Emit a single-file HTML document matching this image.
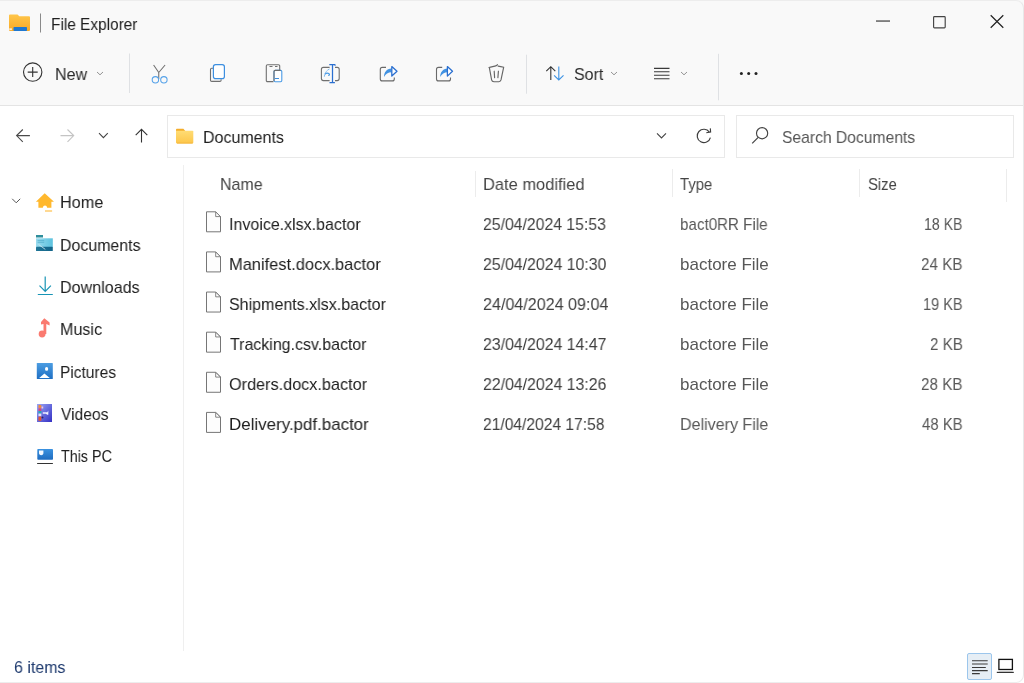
<!DOCTYPE html>
<html><head><meta charset="utf-8">
<style>
*{margin:0;padding:0;box-sizing:border-box}
html,body{width:1024px;height:683px;overflow:hidden;background:#fff}
body{position:relative;font-family:"Liberation Sans",sans-serif;font-size:16px;color:#202020}
.t{position:absolute;line-height:20px;white-space:pre;will-change:transform;transform-origin:0 0;font-size:17px}
svg{position:absolute;overflow:visible}
#top{position:absolute;left:0;top:0;width:1024px;height:106px;background:#f9f9f9;border-bottom:1px solid #e4e4e4}
.sep{position:absolute;width:1px;background:#e3e3e3}
.box{position:absolute;border:1px solid #e9e9e9;background:#fff}
.hs{position:absolute;width:1px;background:#ececec}
.g{color:#444}
.d{color:#404040;letter-spacing:-0.2px}
.ty{color:#575757}
.sz{transform:scaleX(0.87);transform-origin:100% 50%}
</style></head><body>
<div id="top"></div>

<!-- title bar -->
<svg style="left:0;top:0" width="60" height="40" viewBox="0 0 60 40">
  <defs><linearGradient id="fy" x1="0" y1="0" x2="0" y2="1"><stop offset="0" stop-color="#ffc64a"/><stop offset="1" stop-color="#f7a928"/></linearGradient></defs>
  <path d="M10 14.5h7.5l1.8 1.8H29a1 1 0 0 1 1 1V30a1 1 0 0 1-1 1H10a1 1 0 0 1-1-1V15.5a1 1 0 0 1 1-1z" fill="url(#fy)"/>
  <rect x="13.5" y="27" width="13.5" height="4" rx="0.8" fill="#1f78d1"/>
  <rect x="9.3" y="28.3" width="2.6" height="1.8" fill="#fff" opacity="0.8"/>
  <rect x="40" y="13.5" width="1" height="19" fill="#8a8a8a"/>
</svg>

<!-- window controls -->
<svg style="left:860px;top:0" width="164" height="45" viewBox="860 0 164 45">
  <rect x="876" y="20.4" width="14" height="1.3" fill="#4a4a4a"/>
  <rect x="933.6" y="16.6" width="11.6" height="11.2" rx="0.8" fill="none" stroke="#444" stroke-width="1.15"/>
  <path d="M990.7 15.3L1003.3 27.7M1003.3 15.3L990.7 27.7" stroke="#222" stroke-width="1.2"/>
</svg>

<!-- toolbar -->
<svg style="left:0;top:50px" width="800" height="50" viewBox="0 50 800 50">
  <!-- new -->
  <circle cx="32.7" cy="72.1" r="9.2" fill="none" stroke="#333" stroke-width="1.1"/>
  <path d="M32.7 67.1v10M27.7 72.1h10" stroke="#333" stroke-width="1.1"/>
  <path d="M97 72l3 2.8 3-2.8" fill="none" stroke="#888" stroke-width="0.9"/>
  <rect x="129" y="53.5" width="1" height="39.5" fill="#dfe1e4"/>
  <!-- cut -->
  <path d="M153.6 65L158.75 72.5M165.1 65L158.75 72.5M158.75 72.5v6.4" stroke="#6e6e6e" stroke-width="1.05" fill="none"/>
  <circle cx="155.4" cy="79.8" r="3.2" fill="none" stroke="#56a2e9" stroke-width="1.05"/>
  <circle cx="163.9" cy="79.8" r="3.2" fill="none" stroke="#56a2e9" stroke-width="1.05"/>
  <!-- copy -->
  <path d="M213 68.3h-1.3a1.2 1.2 0 0 0-1.2 1.2v10.7a1.2 1.2 0 0 0 1.2 1.2h8.2a1.2 1.2 0 0 0 1.2-1.2v-1" fill="none" stroke="#707070" stroke-width="1.1"/>
  <rect x="213.4" y="64.6" width="11" height="14" rx="2.2" fill="#fff" stroke="#3d8fe0" stroke-width="1.2"/>
  <!-- paste -->
  <path d="M273.5 81.6h-6a1.2 1.2 0 0 1-1.2-1.2V66a1.2 1.2 0 0 1 1.2-1.2h11a1.2 1.2 0 0 1 1.2 1.2v4" fill="none" stroke="#707070" stroke-width="1.1"/>
  <path d="M269.5 66.5h3M275 66.5h2.5" stroke="#707070" stroke-width="1"/>
  <rect x="274" y="70.4" width="7.8" height="11.4" rx="1.2" fill="#fff" stroke="#4a9be6" stroke-width="1.1"/>
  <path d="M274 81v-9.4a1.2 1.2 0 0 1 1.2-1.2h5.4" fill="none" stroke="#707070" stroke-width="1.1"/>
  <path d="M275 78.5h4" stroke="#3d8fe0" stroke-width="1"/>
  <!-- rename -->
  <path d="M329.6 67.4h-6.2a2 2 0 0 0-2 2v9.2a2 2 0 0 0 2 2h6.2M335 67.4h2.2a2 2 0 0 1 2 2v9.2a2 2 0 0 1-2 2H335" fill="none" stroke="#707070" stroke-width="1.1"/>
  <path d="M332.5 64.8v17.7M329.3 64.7h5.4l.8.8M329.5 82.5h5.4" fill="none" stroke="#2a6fd0" stroke-width="1.25"/>
  <path d="M324.4 76.6c.3-3.6 2.2-6.4 5.2-7.6" fill="none" stroke="#5aa6ea" stroke-width="0.9" stroke-dasharray="1.4 0.6"/>
  <path d="M324.9 74.4c1.2-1.3 2.9-1.6 4.2-.6.9.7.2 1.9-.9 1.5" fill="none" stroke="#4a9be6" stroke-width="1.1"/>
  <!-- share 1 -->
  <path d="M386 67.4h-3.7a2 2 0 0 0-2 2v9.5a2 2 0 0 0 2 2h10a2 2 0 0 0 2-2v-1.5" fill="none" stroke="#6a6a6a" stroke-width="1.1"/>
  <path d="M384 77c.1-4.6 2.4-8 7.6-8.4v3.6c-3.6.1-6 1.6-7.6 4.8z" fill="#4192e2"/>
  <path d="M391.8 66.6l5.2 4.7-5.2 4.8z" fill="#fff" stroke="#2a6fd0" stroke-width="1.3" stroke-linejoin="round"/>
  <!-- share 2 -->
  <path d="M442.2 67.4h-3.7a2 2 0 0 0-2 2v9.5a2 2 0 0 0 2 2h10a2 2 0 0 0 2-2v-1.5" fill="none" stroke="#6a6a6a" stroke-width="1.1"/>
  <path d="M440.2 77c.1-4.6 2.4-8 7.6-8.4v3.6c-3.6.1-6 1.6-7.6 4.8z" fill="#4192e2"/>
  <path d="M447.4 66.6l5.1 4.7-5.1 4.8z" fill="#fff" stroke="#2a6fd0" stroke-width="1.3" stroke-linejoin="round"/>
  <!-- delete -->
  <path d="M489 67.5c2.8-.8 5.3-1.2 7.4-1.9l1-.9M498.1 66.1c2 .2 3.8.6 5.7 1.1M489.4 67.8l2.2 12q.4 1.8 2.4 1.9h4.8q1.8-.1 2.2-1.8l2.6-12.3M494.2 71.2l.4 6.4M498.4 71.2l-.5 6.4" fill="none" stroke="#666" stroke-width="1.15" stroke-linecap="round"/>
  <rect x="526" y="54.7" width="1" height="39" fill="#dfe1e4"/>
  <!-- sort -->
  <path d="M550.8 80V66.8M546.3 71.2l4.5-4.5 4.5 4.5" fill="none" stroke="#333" stroke-width="1.1"/>
  <path d="M558.8 66.5v13.3M554.1 75.3l4.7 4.6 4.7-4.6" fill="none" stroke="#3d92e3" stroke-width="1.1"/>
  <path d="M611 72l3 2.8 3-2.8" fill="none" stroke="#888" stroke-width="0.9"/>
  <!-- view -->
  <path d="M654 68.4h15.5M654 71.8h15.5M654 75.2h15.5M654 78.8h15.5" stroke="#3a3a3a" stroke-width="1.1"/>
  <path d="M681 72l3 2.8 3-2.8" fill="none" stroke="#888" stroke-width="0.9"/>
  <rect x="718" y="53.8" width="1" height="46.5" fill="#dfe1e4"/>
  <!-- more -->
  <circle cx="741.4" cy="73.4" r="1.5" fill="#222"/>
  <circle cx="748.7" cy="73.4" r="1.5" fill="#222"/>
  <circle cx="756" cy="73.4" r="1.5" fill="#222"/>
</svg>

<!-- nav row -->
<svg style="left:0;top:110px" width="180" height="50" viewBox="0 110 180 50">
  <path d="M16.6 135.6h13.3M22.8 129.5l-6.2 6.1 6.2 6.2" fill="none" stroke="#4a4a4a" stroke-width="1.1"/>
  <path d="M73.7 135.6H60.5M67.5 129.5l6.2 6.1-6.2 6.2" fill="none" stroke="#c4c4c4" stroke-width="1.1"/>
  <path d="M99 133.2l4.4 4.4 4.4-4.4" fill="none" stroke="#444" stroke-width="1.1"/>
  <path d="M141.5 142.5v-13M135.7 135.2l5.8-5.8 5.8 5.8" fill="none" stroke="#333" stroke-width="1.1"/>
</svg>
<div class="box" style="left:167px;top:115px;width:558px;height:43px"></div>
<div class="box" style="left:736px;top:115px;width:277.5px;height:43px"></div>
<svg style="left:160px;top:110px" width="620" height="50" viewBox="160 110 620 50">
  <defs><linearGradient id="fy2" x1="0" y1="0" x2="0" y2="1"><stop offset="0" stop-color="#ffdc74"/><stop offset="1" stop-color="#fdc64a"/></linearGradient></defs>
  <path d="M176.8 128.8h6.6l1.9 2.3H176v-1.5a.8.8 0 0 1 .8-.8z" fill="#f4ad2b"/>
  <path d="M176 130.8h16.5a.8.8 0 0 1 .8.8v11a.8.8 0 0 1-.8.8H176.8a.8.8 0 0 1-.8-.8z" fill="url(#fy2)"/>
  <path d="M177 143.1h15.6" stroke="#f2b23a" stroke-width="0.8"/>
  <path d="M657 133.4l4.5 4.5 4.5-4.5" fill="none" stroke="#444" stroke-width="1.1"/>
  <path d="M709.4 132.1A6.7 6.7 0 1 0 710.4 137.6" fill="none" stroke="#3e3e3e" stroke-width="1.15"/>
  <path d="M710.3 128.4L710.6 132L706.3 132.7" fill="none" stroke="#3e3e3e" stroke-width="1.15"/>
  <circle cx="762.1" cy="133.2" r="5.6" fill="none" stroke="#444" stroke-width="1.15"/>
  <path d="M758.2 137.3l-6 6" stroke="#444" stroke-width="1.2"/>
</svg>

<!-- sidebar -->
<div class="sep" style="left:182.5px;top:165px;height:486px;background:#efefef"></div>
<svg style="left:0;top:180px" width="60" height="300" viewBox="0 180 60 300">
  <path d="M12.2 198.8l4 4 4-4" fill="none" stroke="#555" stroke-width="1"/>
  <!-- home -->
  <path d="M44.7 193.2L35.9 201.8H38.4V207.8H42.8Q43.1 205.6 45 205.6Q46.9 205.6 47.2 207.8H51.4V201.8H54z" fill="#ffb82e"/>
  <rect x="45" y="210.3" width="7.1" height="1.4" fill="#ffc964"/>
  <!-- documents -->
  <defs><linearGradient id="dg" x1="0" y1="0" x2="1" y2="0"><stop offset="0" stop-color="#9adbee"/><stop offset="1" stop-color="#5cc2de"/></linearGradient>
  <linearGradient id="dg2" x1="0" y1="0" x2="1" y2="0"><stop offset="0" stop-color="#1f7596"/><stop offset="1" stop-color="#136489"/></linearGradient></defs>
  <rect x="36" y="235" width="7" height="2.5" fill="#2f8e9c"/>
  <rect x="36" y="238.3" width="16.8" height="9" fill="url(#dg)"/>
  <rect x="36" y="246.8" width="16.8" height="4.3" rx="0.7" fill="url(#dg2)"/>
  <path d="M37.6 240.6h6.6M37.6 242.3h6.6" stroke="#3f9fbe" stroke-width="0.55"/>
  <path d="M38.6 244.5L45.3 249.4" stroke="#d5eef5" stroke-width="0.8"/>
  <!-- downloads -->
  <path d="M45.2 276.5v14.8M39.5 285.6l5.7 5.7 5.7-5.7" fill="none" stroke="#1894b5" stroke-width="1.2"/>
  <rect x="37.8" y="294" width="15" height="1" fill="#1894b5"/>
  <!-- music -->
  <path d="M44.3 318.2L49.6 322.4V325.4L46.3 324V334H43.5V324L41 324.5V322Z" fill="#fa7a70"/>
  <circle cx="42.1" cy="334" r="3.4" fill="#fa7a70"/>
  <!-- pictures -->
  <defs><linearGradient id="pg" x1="0" y1="0" x2="0" y2="1"><stop offset="0" stop-color="#4c9de2"/><stop offset="1" stop-color="#1e6fc4"/></linearGradient>
  <linearGradient id="vg" x1="0" y1="0" x2="1" y2="1"><stop offset="0" stop-color="#9aa6f6"/><stop offset="1" stop-color="#3430c4"/></linearGradient>
  <linearGradient id="cg" x1="0" y1="0" x2="0" y2="1"><stop offset="0" stop-color="#3a92e0"/><stop offset="1" stop-color="#1f6cc0"/></linearGradient></defs>
  <rect x="36.8" y="363" width="16" height="16" rx="0.6" fill="url(#pg)"/>
  <ellipse cx="46.6" cy="368.9" rx="1.6" ry="1.9" fill="#fff"/>
  <path d="M39.2 377.9L44.4 373.4L49.8 377.9z" fill="#fff"/>
  <!-- videos -->
  <rect x="37" y="404" width="15" height="18" fill="url(#vg)"/>
  <rect x="38.5" y="405" width="2.8" height="3.2" fill="#f08a3a"/>
  <rect x="38.5" y="408.4" width="2.8" height="2.6" fill="#d8457a"/>
  <rect x="38.5" y="411" width="2.8" height="2.6" fill="#27a7b8"/>
  <rect x="38.5" y="413.6" width="2.8" height="2.6" fill="#e0e0f8"/>
  <rect x="38.5" y="416.6" width="2.8" height="4.2" fill="#e8542f"/>
  <rect x="41.6" y="406.5" width="1.6" height="2" fill="#f4c6e0"/>
  <path d="M42.8 412.2h4.5l1 -1.6v4.2h-1l-1.5-1h-3z" fill="#f2f0ff"/>
  <circle cx="42.5" cy="417.5" r="1" fill="#2b2470"/>
  <!-- this pc -->
  <rect x="37.3" y="449" width="15.7" height="10.7" rx="0.8" fill="url(#cg)"/>
  <path d="M39 450.6h4.4v3a2.2 2 0 0 1-2.2 1.6 2.2 2 0 0 1-2.2-1.6z" fill="#f2f8ff"/>
  <rect x="37" y="462.9" width="16" height="1.1" rx="0.5" fill="#333"/>
</svg>

<!-- headers -->
<div class="hs" style="left:475px;top:171px;height:25.5px"></div>
<div class="hs" style="left:672px;top:168.5px;height:28px"></div>
<div class="hs" style="left:859px;top:168.5px;height:28px"></div>
<div class="hs" style="left:1006px;top:168.5px;height:33px"></div>

<!-- file rows -->
<svg style="left:200px;top:200px" width="30" height="250" viewBox="200 200 30 250">
  <defs>
    <g id="fi">
      <path d="M206.5 211.5h9.3l4.7 4.7v15.3h-14z" fill="#fdfdfd" stroke="#767676" stroke-width="1"/>
      <path d="M215.7 211.6v4.7h4.7z" fill="#fff" stroke="#767676" stroke-width="0.9" stroke-linejoin="round"/>
    </g>
  </defs>
  <use href="#fi" y="0.3"/>
  <use href="#fi" y="40.42"/>
  <use href="#fi" y="80.54"/>
  <use href="#fi" y="120.66"/>
  <use href="#fi" y="160.78"/>
  <use href="#fi" y="200.90"/>
</svg>




<!-- status -->
<div class="t" style="left:50.69px;top:15px;color:#202020;transform:scaleX(0.9053)">File Explorer</div>
<div class="t" style="left:55.05px;top:65px;color:#2a2a2a;transform:scaleX(0.9455)">New</div>
<div class="t" style="left:573.56px;top:65px;color:#2a2a2a;transform:scaleX(0.9400)">Sort</div>
<div class="t" style="left:203.46px;top:128px;color:#202020;transform:scaleX(0.9412)">Documents</div>
<div class="t" style="left:782.08px;top:128px;color:#555555;transform:scaleX(0.9210)">Search Documents</div>
<div class="t" style="left:59.55px;top:193px;color:#202020;transform:scaleX(0.9545)">Home</div>
<div class="t" style="left:59.56px;top:236px;color:#202020;transform:scaleX(0.9365)">Documents</div>
<div class="t" style="left:59.55px;top:278px;color:#202020;transform:scaleX(0.9470)">Downloads</div>
<div class="t" style="left:59.55px;top:320px;color:#202020;transform:scaleX(0.9477)">Music</div>
<div class="t" style="left:59.59px;top:363px;color:#202020;transform:scaleX(0.9117)">Pictures</div>
<div class="t" style="left:60.50px;top:405px;color:#202020;transform:scaleX(0.9176)">Videos</div>
<div class="t" style="left:60.50px;top:447px;color:#202020;transform:scaleX(0.8417)">This PC</div>
<div class="t" style="left:219.76px;top:175px;color:#444444;transform:scaleX(0.9386)">Name</div>
<div class="t" style="left:482.78px;top:175px;color:#444444;transform:scaleX(0.9675)">Date modified</div>
<div class="t" style="left:680.20px;top:175px;color:#444444;transform:scaleX(0.8722)">Type</div>
<div class="t" style="left:867.53px;top:175px;color:#444444;transform:scaleX(0.8742)">Size</div>
<div class="t" style="left:228.96px;top:215px;color:#202020;transform:scaleX(0.9410)">Invoice.xlsx.bactor</div>
<div class="t" style="left:482.82px;top:215px;color:#404040;transform:scaleX(0.9279)">25/04/2024 15:53</div>
<div class="t" style="left:680.21px;top:215px;color:#575757;transform:scaleX(0.8918)">bact0RR File</div>
<div class="t" style="left:923.97px;top:215px;color:#575757;transform:scaleX(0.8289)">18 KB</div>
<div class="t" style="left:228.93px;top:255px;color:#202020;transform:scaleX(0.9673)">Manifest.docx.bactor</div>
<div class="t" style="left:482.82px;top:255px;color:#404040;transform:scaleX(0.9317)">25/04/2024 10:30</div>
<div class="t" style="left:680.10px;top:255px;color:#575757;transform:scaleX(0.9977)">bactore File</div>
<div class="t" style="left:920.90px;top:255px;color:#575757;transform:scaleX(0.8956)">24 KB</div>
<div class="t" style="left:228.96px;top:295px;color:#202020;transform:scaleX(0.9430)">Shipments.xlsx.bactor</div>
<div class="t" style="left:482.80px;top:295px;color:#404040;transform:scaleX(0.9469)">24/04/2024 09:04</div>
<div class="t" style="left:680.10px;top:295px;color:#575757;transform:scaleX(0.9977)">bactore File</div>
<div class="t" style="left:922.85px;top:295px;color:#575757;transform:scaleX(0.8533)">19 KB</div>
<div class="t" style="left:229.90px;top:335px;color:#202020;transform:scaleX(0.9386)">Tracking.csv.bactor</div>
<div class="t" style="left:482.82px;top:335px;color:#404040;transform:scaleX(0.9317)">23/04/2024 14:47</div>
<div class="t" style="left:680.10px;top:335px;color:#575757;transform:scaleX(0.9977)">bactore File</div>
<div class="t" style="left:929.91px;top:335px;color:#575757;transform:scaleX(0.8943)">2 KB</div>
<div class="t" style="left:228.95px;top:375px;color:#202020;transform:scaleX(0.9549)">Orders.docx.bactor</div>
<div class="t" style="left:482.82px;top:375px;color:#404040;transform:scaleX(0.9317)">22/04/2024 13:26</div>
<div class="t" style="left:680.10px;top:375px;color:#575757;transform:scaleX(0.9977)">bactore File</div>
<div class="t" style="left:920.90px;top:375px;color:#575757;transform:scaleX(0.8956)">28 KB</div>
<div class="t" style="left:228.91px;top:415px;color:#202020;transform:scaleX(0.9950)">Delivery.pdf.bactor</div>
<div class="t" style="left:482.83px;top:415px;color:#404040;transform:scaleX(0.9172)">21/04/2024 17:58</div>
<div class="t" style="left:680.16px;top:415px;color:#575757;transform:scaleX(0.9446)">Delivery File</div>
<div class="t" style="left:921.80px;top:415px;color:#575757;transform:scaleX(0.8761)">48 KB</div>
<div class="t" style="left:13.86px;top:658px;color:#1e3a6e;transform:scaleX(0.9377)">6 items</div>
<div style="position:absolute;left:966.5px;top:653px;width:25px;height:26.5px;border:1px solid #9cc6ec;border-radius:2px;background:#e6eef5"></div>
<svg style="left:960px;top:645px" width="64" height="38" viewBox="960 645 64 38">
  <path d="M972 660.7h15.7M972 664h15.7M972 667.5h13.8M972 670.6h15.7M972 673.6h7.8" stroke="#3a3a3a" stroke-width="1.1"/>
  <rect x="998.9" y="659.4" width="13.5" height="10.1" fill="none" stroke="#111" stroke-width="1.3"/>
  <rect x="999" y="670.2" width="13.4" height="1.6" fill="#dedede"/>
  <rect x="996.8" y="671.8" width="17" height="1.2" fill="#333"/>
</svg>
<div style="position:absolute;left:-2px;top:0;width:1026px;height:683px;border-top:1px solid #ededed;border-right:1px solid #e8e8e8;border-bottom:1px solid #ededed;border-radius:0 8px 8px 0;pointer-events:none"></div>
</body></html>
